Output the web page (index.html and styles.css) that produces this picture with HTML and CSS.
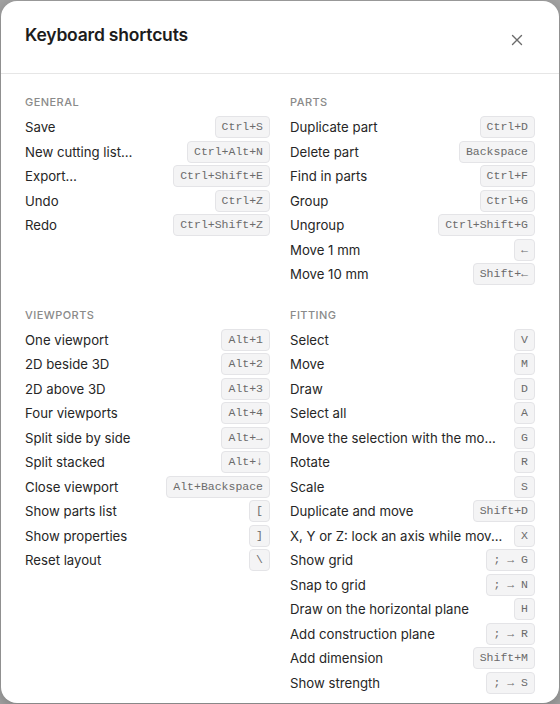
FILE: index.html
```html
<!DOCTYPE html>
<html lang="en">
<head>
<meta charset="utf-8">
<title>Keyboard shortcuts</title>
<link rel="stylesheet" href="styles.css">
</head>
<body>
<div class="dialog">
  <header class="header">
    <h1 class="title">Keyboard shortcuts</h1>
    <button class="close" aria-label="Close">
      <svg width="12" height="12" viewBox="0 0 12 12"><path d="M1.5 1.5L10.5 10.5M10.5 1.5L1.5 10.5" stroke="#6b6b6b" stroke-width="1.4" stroke-linecap="round" fill="none"/></svg>
    </button>
  </header>
  <div class="body">
    <section class="section">
      <h2 class="label">General</h2>
      <div class="row"><span class="name">Save</span><kbd>Ctrl+S</kbd></div>
      <div class="row"><span class="name">New cutting list…</span><kbd>Ctrl+Alt+N</kbd></div>
      <div class="row"><span class="name">Export…</span><kbd>Ctrl+Shift+E</kbd></div>
      <div class="row"><span class="name">Undo</span><kbd>Ctrl+Z</kbd></div>
      <div class="row"><span class="name">Redo</span><kbd>Ctrl+Shift+Z</kbd></div>
    </section>
    <section class="section">
      <h2 class="label">Parts</h2>
      <div class="row"><span class="name">Duplicate part</span><kbd>Ctrl+D</kbd></div>
      <div class="row"><span class="name">Delete part</span><kbd>Backspace</kbd></div>
      <div class="row"><span class="name">Find in parts</span><kbd>Ctrl+F</kbd></div>
      <div class="row"><span class="name">Group</span><kbd>Ctrl+G</kbd></div>
      <div class="row"><span class="name">Ungroup</span><kbd>Ctrl+Shift+G</kbd></div>
      <div class="row"><span class="name">Move 1 mm</span><kbd>←</kbd></div>
      <div class="row"><span class="name">Move 10 mm</span><kbd>Shift+←</kbd></div>
    </section>
    <section class="section">
      <h2 class="label">Viewports</h2>
      <div class="row"><span class="name">One viewport</span><kbd>Alt+1</kbd></div>
      <div class="row"><span class="name">2D beside 3D</span><kbd>Alt+2</kbd></div>
      <div class="row"><span class="name">2D above 3D</span><kbd>Alt+3</kbd></div>
      <div class="row"><span class="name">Four viewports</span><kbd>Alt+4</kbd></div>
      <div class="row"><span class="name">Split side by side</span><kbd>Alt+→</kbd></div>
      <div class="row"><span class="name">Split stacked</span><kbd>Alt+↓</kbd></div>
      <div class="row"><span class="name">Close viewport</span><kbd>Alt+Backspace</kbd></div>
      <div class="row"><span class="name">Show parts list</span><kbd>[</kbd></div>
      <div class="row"><span class="name">Show properties</span><kbd>]</kbd></div>
      <div class="row"><span class="name">Reset layout</span><kbd>\</kbd></div>
    </section>
    <section class="section">
      <h2 class="label">Fitting</h2>
      <div class="row"><span class="name">Select</span><kbd>V</kbd></div>
      <div class="row"><span class="name">Move</span><kbd>M</kbd></div>
      <div class="row"><span class="name">Draw</span><kbd>D</kbd></div>
      <div class="row"><span class="name">Select all</span><kbd>A</kbd></div>
      <div class="row"><span class="name">Move the selection with the mo...</span><kbd>G</kbd></div>
      <div class="row"><span class="name">Rotate</span><kbd>R</kbd></div>
      <div class="row"><span class="name">Scale</span><kbd>S</kbd></div>
      <div class="row"><span class="name">Duplicate and move</span><kbd>Shift+D</kbd></div>
      <div class="row"><span class="name">X, Y or Z: lock an axis while mov...</span><kbd>X</kbd></div>
      <div class="row"><span class="name">Show grid</span><kbd>; → G</kbd></div>
      <div class="row"><span class="name">Snap to grid</span><kbd>; → N</kbd></div>
      <div class="row"><span class="name">Draw on the horizontal plane</span><kbd>H</kbd></div>
      <div class="row"><span class="name">Add construction plane</span><kbd>; → R</kbd></div>
      <div class="row"><span class="name">Add dimension</span><kbd>Shift+M</kbd></div>
      <div class="row"><span class="name">Show strength</span><kbd>; → S</kbd></div>
    </section>
  </div>
</div>
</body>
</html>
```

FILE: styles.css
```css
html, body {
  margin: 0;
  padding: 0;
  height: 100%;
}
body {
  background: #a4a4a4;
  font-family: Inter, "Noto Sans", sans-serif;
  color: #262626;
  overflow: hidden;
}
.dialog {
  box-sizing: border-box;
  margin: 1px;
  height: 702px;
  background: #fff;
  border-radius: 16px;
  overflow: hidden;
  box-shadow: 0 4px 16px rgba(0,0,0,0.25);
}
.header {
  box-sizing: border-box;
  height: 73px;
  display: flex;
  justify-content: space-between;
  align-items: flex-start;
  padding: 22px 24px 0 24px;
  border-bottom: 1px solid #e6e6e6;
}
.title {
  margin: 0;
  font-size: 17.5px;
  font-weight: 600;
  line-height: 24px;
  letter-spacing: -0.2px;
  color: #1c1c1c;
}
.close {
  border: 0;
  background: transparent;
  padding: 0;
  width: 28px;
  height: 28px;
  margin-top: 3px;
  margin-right: 4px;
  display: flex;
  align-items: center;
  justify-content: center;
}
.body {
  display: grid;
  grid-template-columns: 1fr 1fr;
  column-gap: 20px;
  row-gap: 21px;
  padding: 21px 24px 0 24px;
}
.section {
  min-width: 0;
}
.label {
  margin: 0 0 6px 0;
  font-size: 11px;
  line-height: 14px;
  font-weight: 500;
  text-transform: uppercase;
  letter-spacing: 0.04em;
  color: #8a8a8a;
}
.row {
  height: 24.5px;
  display: flex;
  align-items: center;
  justify-content: space-between;
  gap: 6px;
  font-size: 13.2px;
}
.name {
  flex: 1 1 auto;
  min-width: 0;
  white-space: nowrap;
  overflow: hidden;
  text-overflow: ellipsis;
}
kbd {
  flex: 0 0 auto;
  box-sizing: border-box;
  height: 22px;
  line-height: 20px;
  padding: 0 6px;
  font-family: "Liberation Mono", "DejaVu Sans Mono", monospace;
  font-size: 11.5px;
  color: #6b6b6b;
  background: #f4f4f5;
  border: 1px solid #e4e4e7;
  border-radius: 4px;
}
```
